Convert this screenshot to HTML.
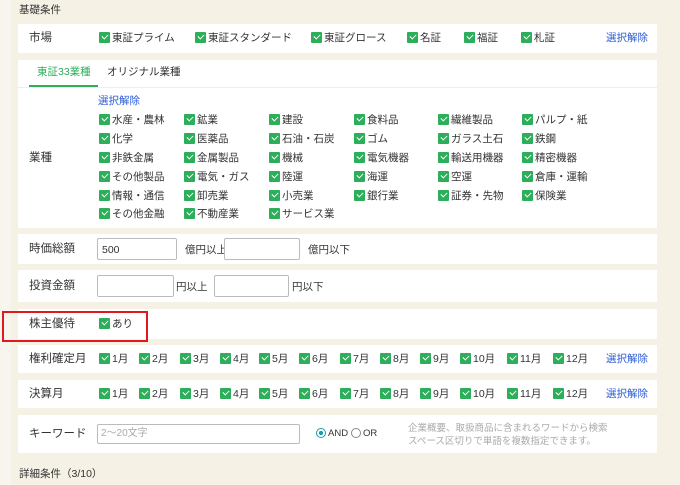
<!DOCTYPE html>
<html><head><meta charset="utf-8"><style>
*{margin:0;padding:0;box-sizing:border-box}
body{width:680px;height:485px;background:#f5f1e5;font-family:"Liberation Sans","Noto Sans CJK JP",sans-serif;font-size:10.5px;color:#333;position:relative;overflow:hidden}
.strip{position:absolute;left:0;top:0;width:11px;height:485px;background:#f8f5ee}
.p{position:absolute;left:18px;width:639px;background:#fff}
.t{position:absolute;white-space:nowrap;line-height:12px}
.c{position:absolute;white-space:nowrap;line-height:12px;padding-left:13px}
.c:before{content:"";position:absolute;left:0;top:0;width:11px;height:11px;background:#2cae5b;border-radius:1px}
.c:after{content:"";position:absolute;left:3px;top:2px;width:5px;height:3px;border-left:1.6px solid #fff;border-bottom:1.6px solid #fff;transform:rotate(-45deg)}
.lnk{color:#2a5bd7}
.in{position:absolute;border:1px solid #bbb;background:#fff;height:22px;border-radius:2px}
</style></head><body>
<div class="strip"></div>
<div class="t" style="left:19px;top:4px;font-size:10.5px">基礎条件</div>

<div class="p" style="top:24px;height:29px"></div>
<div class="t" style="left:29px;top:32px;font-size:11.5px">市場</div>
<div class="c" style="left:99px;top:32px">東証プライム</div>
<div class="c" style="left:195px;top:32px">東証スタンダード</div>
<div class="c" style="left:311px;top:32px">東証グロース</div>
<div class="c" style="left:407px;top:32px">名証</div>
<div class="c" style="left:464px;top:32px">福証</div>
<div class="c" style="left:521px;top:32px">札証</div>
<div class="t lnk" style="left:606px;top:32px">選択解除</div>

<div class="p" style="top:60px;height:168px"></div>
<div style="position:absolute;left:18px;top:87px;width:639px;height:1px;background:#eee"></div>
<div class="t" style="left:37px;top:66px;color:#2cae5b">東証33業種</div>
<div style="position:absolute;left:29px;top:85px;width:69px;height:2px;background:#2cae5b"></div>
<div class="t" style="left:107px;top:66px">オリジナル業種</div>
<div class="t lnk" style="left:98px;top:95px">選択解除</div>
<div class="t" style="left:29px;top:152px;font-size:11.5px">業種</div>
<div class="c" style="left:99px;top:114px">水産・農林</div><div class="c" style="left:184px;top:114px">鉱業</div><div class="c" style="left:269px;top:114px">建設</div><div class="c" style="left:354px;top:114px">食料品</div><div class="c" style="left:438px;top:114px">繊維製品</div><div class="c" style="left:522px;top:114px">パルプ・紙</div>
<div class="c" style="left:99px;top:133px">化学</div><div class="c" style="left:184px;top:133px">医薬品</div><div class="c" style="left:269px;top:133px">石油・石炭</div><div class="c" style="left:354px;top:133px">ゴム</div><div class="c" style="left:438px;top:133px">ガラス土石</div><div class="c" style="left:522px;top:133px">鉄鋼</div>
<div class="c" style="left:99px;top:152px">非鉄金属</div><div class="c" style="left:184px;top:152px">金属製品</div><div class="c" style="left:269px;top:152px">機械</div><div class="c" style="left:354px;top:152px">電気機器</div><div class="c" style="left:438px;top:152px">輸送用機器</div><div class="c" style="left:522px;top:152px">精密機器</div>
<div class="c" style="left:99px;top:171px">その他製品</div><div class="c" style="left:184px;top:171px">電気・ガス</div><div class="c" style="left:269px;top:171px">陸運</div><div class="c" style="left:354px;top:171px">海運</div><div class="c" style="left:438px;top:171px">空運</div><div class="c" style="left:522px;top:171px">倉庫・運輸</div>
<div class="c" style="left:99px;top:190px">情報・通信</div><div class="c" style="left:184px;top:190px">卸売業</div><div class="c" style="left:269px;top:190px">小売業</div><div class="c" style="left:354px;top:190px">銀行業</div><div class="c" style="left:438px;top:190px">証券・先物</div><div class="c" style="left:522px;top:190px">保険業</div>
<div class="c" style="left:99px;top:208px">その他金融</div><div class="c" style="left:184px;top:208px">不動産業</div><div class="c" style="left:269px;top:208px">サービス業</div>

<div class="p" style="top:234px;height:30px"></div>
<div class="t" style="left:29px;top:243px;font-size:11.5px">時価総額</div>
<div class="in" style="left:97px;top:238px;width:80px"></div><div class="t" style="left:102px;top:244px">500</div>
<div class="t" style="left:185px;top:244px">億円以上</div>
<div class="in" style="left:224px;top:238px;width:76px"></div>
<div class="t" style="left:308px;top:244px">億円以下</div>

<div class="p" style="top:270px;height:32px"></div>
<div class="t" style="left:29px;top:280px;font-size:11.5px">投資金額</div>
<div class="in" style="left:97px;top:275px;width:77px"></div>
<div class="t" style="left:176px;top:281px">円以上</div>
<div class="in" style="left:214px;top:275px;width:75px"></div>
<div class="t" style="left:292px;top:281px">円以下</div>

<div class="p" style="top:309px;height:30px"></div>
<div class="t" style="left:29px;top:318px;font-size:11.5px">株主優待</div>
<div class="c" style="left:99px;top:318px">あり</div>
<div style="position:absolute;left:2px;top:311px;width:146px;height:31px;border:2px solid #e0191e"></div>

<div class="p" style="top:345px;height:28px"></div>
<div class="t" style="left:29px;top:353px;font-size:11.5px">権利確定月</div>
<div class="p" style="top:380px;height:28px"></div>
<div class="t" style="left:29px;top:388px;font-size:11.5px">決算月</div>
<div class="t lnk" style="left:606px;top:353px">選択解除</div>
<div class="t lnk" style="left:606px;top:388px">選択解除</div>

<div class="p" style="top:415px;height:38px"></div>
<div class="t" style="left:29px;top:428px;font-size:11.5px">キーワード</div>
<div class="in" style="left:97px;top:424px;width:203px;height:20px"></div>
<div class="t" style="left:101px;top:428px;color:#aaa;font-size:10px">2〜20文字</div>
<div style="position:absolute;left:316px;top:428px;width:10px;height:10px;border-radius:50%;border:1px solid #1a9bb0;background:radial-gradient(#1a9bb0 35%,#fff 40%)"></div>
<div class="t" style="left:328px;top:428px;font-size:9.5px">AND</div>
<div style="position:absolute;left:351px;top:428px;width:10px;height:10px;border-radius:50%;border:1px solid #888"></div>
<div class="t" style="left:363px;top:428px;font-size:9.5px">OR</div>
<div class="t" style="left:408px;top:422px;color:#aaa;font-size:9.5px;line-height:13px">企業概要、取扱商品に含まれるワードから検索<br>スペース区切りで単語を複数指定できます。</div>

<div class="t" style="left:19px;top:468px;font-size:10.5px">詳細条件（3/10）</div>

<div class="c" style="left:99px;top:353px">1月</div><div class="c" style="left:139px;top:353px">2月</div><div class="c" style="left:180px;top:353px">3月</div><div class="c" style="left:220px;top:353px">4月</div><div class="c" style="left:259px;top:353px">5月</div><div class="c" style="left:299px;top:353px">6月</div><div class="c" style="left:340px;top:353px">7月</div><div class="c" style="left:380px;top:353px">8月</div><div class="c" style="left:420px;top:353px">9月</div><div class="c" style="left:460px;top:353px">10月</div><div class="c" style="left:507px;top:353px">11月</div><div class="c" style="left:553px;top:353px">12月</div>
<div class="c" style="left:99px;top:388px">1月</div><div class="c" style="left:139px;top:388px">2月</div><div class="c" style="left:180px;top:388px">3月</div><div class="c" style="left:220px;top:388px">4月</div><div class="c" style="left:259px;top:388px">5月</div><div class="c" style="left:299px;top:388px">6月</div><div class="c" style="left:340px;top:388px">7月</div><div class="c" style="left:380px;top:388px">8月</div><div class="c" style="left:420px;top:388px">9月</div><div class="c" style="left:460px;top:388px">10月</div><div class="c" style="left:507px;top:388px">11月</div><div class="c" style="left:553px;top:388px">12月</div>
</body></html>
